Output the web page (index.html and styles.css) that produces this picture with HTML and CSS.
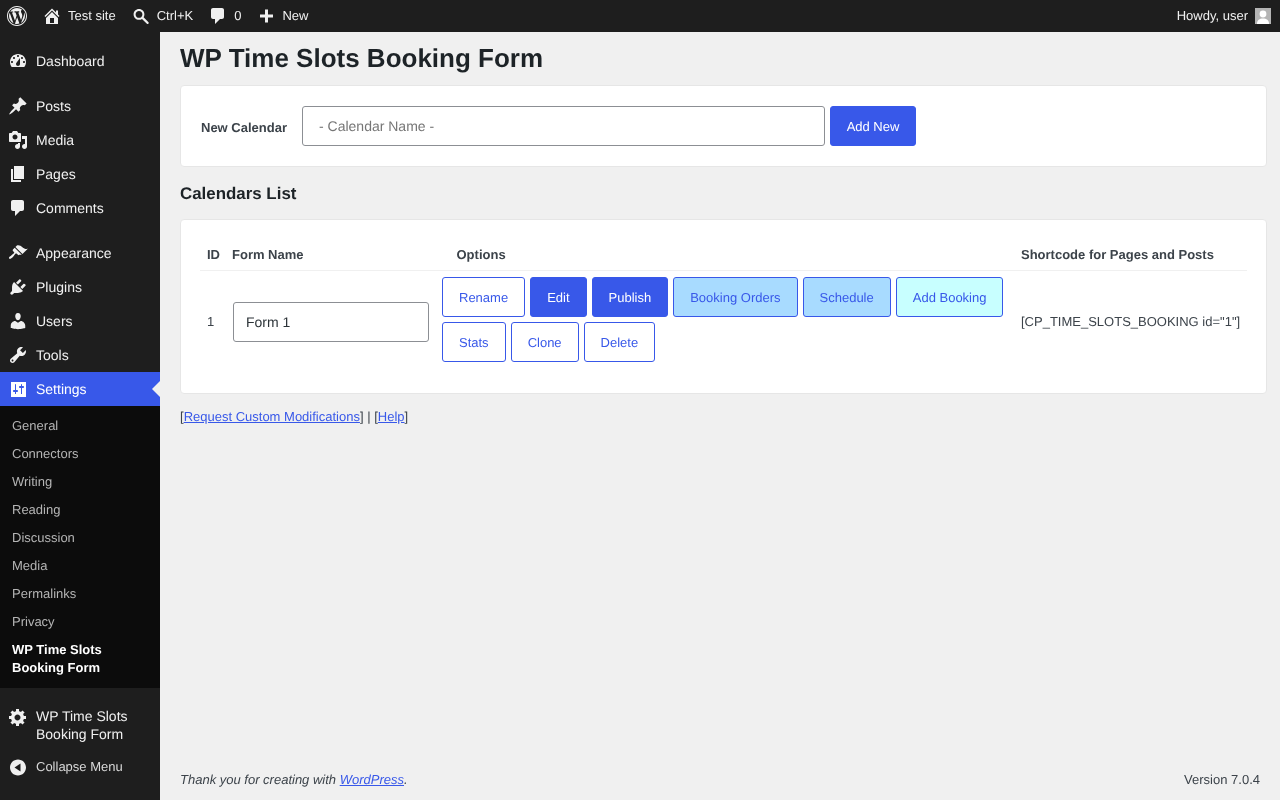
FILE: index.html
```html
<!DOCTYPE html>
<html>
<head lang="en">
    <meta charset="UTF-8">
    <title>WP Time Slots Booking Form</title>
    <link rel="stylesheet" href="styles.css">
</head>
<body>
    <!-- top bar -->
    <div class="adminbar">
        <div class="barleft">
            <a class="baritem"><svg width="20" height="20" viewBox="0 0 20 20"><path d="M20 10c0-5.52-4.48-10-10-10S0 4.48 0 10s4.48 10 10 10 10-4.48 10-10zM10 1.01c4.97 0 8.99 4.02 8.99 8.99s-4.02 8.99-8.99 8.99S1.01 14.97 1.01 10 5.03 1.01 10 1.01zM8.01 14.82L4.96 6.61c.49-.03 1.05-.08 1.05-.08.43-.05.38-1.01-.06-.99 0 0-1.29.1-2.13.1-.15 0-.33 0-.52-.01 1.44-2.17 3.9-3.6 6.7-3.6 2.09 0 3.99.79 5.41 2.09-.6-.08-1.45.35-1.45 1.42 0 .66.38 1.22.79 1.88.31.54.5 1.22.5 2.21 0 1.34-1.27 4.48-1.27 4.48l-2.71-7.5c.48-.03.75-.16.75-.16.43-.05.38-1.1-.05-1.08 0 0-1.3.11-2.14.11-.78 0-2.11-.11-2.11-.11-.43-.02-.48 1.06-.05 1.08l.84.08 1.12 3.04zm6.02 2.15L16.64 10s.67-1.69.39-3.81c.63 1.14.94 2.42.94 3.81 0 2.96-1.56 5.58-3.94 6.97zM2.68 6.77L6.5 17.25c-2.67-1.3-4.47-4.08-4.47-7.25 0-1.16.2-2.23.65-3.23zm7.45 4.53l2.29 6.25c-.75.27-1.57.42-2.42.42-.72 0-1.41-.11-2.06-.3z"/></svg></a>
            <a class="baritem"><svg width="20" height="20" viewBox="0 0 20 20"><path fill-rule="evenodd" d="M16 8.500l1.530 1.530-1.060 1.060L10 4.620l-6.470 6.470-1.060-1.060L10 2.500l4 4v-2h2v4zm-6-2.460l6 5.990V18H4v-5.970zM12 17v-5H8v5h4z"/></svg>Test site</a>
            <a class="baritem"><svg width="20" height="20" viewBox="0 0 20 20"><path fill-rule="evenodd" d="M12.600 11.300l4.900 4.900c.4.4.4 1 0 1.400l-.2.2c-.4.4-1 .4-1.400 0l-4.900-4.900c-.9.6-1.900.9-3 .9C5 13.800 2.600 11.400 2.600 8.400S5 3 8 3s5.400 2.400 5.400 5.400c0 1.100-.3 2.100-.8 2.900zM8 5C6.100 5 4.600 6.500 4.600 8.400S6.100 11.800 8 11.800s3.400-1.500 3.400-3.400S9.900 5 8 5z"/></svg>Ctrl+K</a>
            <a class="baritem"><svg width="20" height="20" viewBox="0 0 20 20"><path d="M5 2h9c1.100 0 2 .9 2 2v7c0 1.100-.9 2-2 2h-2l-5 5v-5H5c-1.100 0-2-.9-2-2V4c0-1.100.9-2 2-2z"/></svg>0</a>
            <a class="baritem"><svg width="20" height="20" viewBox="0 0 20 20"><path d="M17 8.500v3h-5v5H9v-5H4v-3h5v-5h3v5z"/></svg>New</a>
        </div>
        <div class="barright">
            Howdy, user
            <span class="avatar"><svg width="16" height="16" viewBox="0 0 16 16"><rect width="16" height="16" fill="#b4b4b4"/><circle cx="8" cy="6" r="3.400" fill="#fff"/><path d="M2 16c0-4 2.500-5.500 6-5.500s6 1.500 6 5.500z" fill="#fff"/></svg></span>
        </div>
    </div>

    <div class="wrapper">
        <!-- left menu -->
        <div class="sidemenu">
            <ul class="menu first">
                <li><svg width="20" height="20" viewBox="0 0 20 20"><path fill-rule="evenodd" d="M3.760 16h12.480c1.100-1.370 1.760-3.110 1.760-5 0-4.420-3.580-8-8-8s-8 3.580-8 8c0 1.890.66 3.630 1.760 5zM10 4c.55 0 1 .45 1 1s-.45 1-1 1-1-.45-1-1 .45-1 1-1zM6 6c.55 0 1 .45 1 1s-.45 1-1 1-1-.45-1-1 .45-1 1-1zm8 0c.55 0 1 .45 1 1s-.45 1-1 1-1-.45-1-1 .45-1 1-1zm-5.370 5.550L12 7v6c0 1.100-.9 2-2 2s-2-.9-2-2c0-.57.24-1.080.63-1.450zM4 10c.55 0 1 .45 1 1s-.45 1-1 1-1-.45-1-1 .45-1 1-1zm12 0c.55 0 1 .45 1 1s-.45 1-1 1-1-.45-1-1 .45-1 1-1z"/></svg>Dashboard</li>
            </ul>
            <ul class="menu">
                <li><svg width="20" height="20" viewBox="0 0 20 20"><path d="M10.440 3.020l1.820-1.820 6.360 6.350-1.830 1.820c-1.050-.68-2.480-.57-3.410.36l-.75.75c-.92.93-1.040 2.350-.35 3.410l-1.830 1.820-2.410-2.410-2.800 2.790c-.42.42-3.380 2.710-3.800 2.290s1.860-3.390 2.280-3.810l2.790-2.790L4.100 9.360l1.830-1.820c1.050.69 2.480.57 3.400-.36l.75-.75c.93-.92 1.050-2.350.36-3.410z"/></svg>Posts</li>
                <li><svg width="20" height="20" viewBox="0 0 20 20"><path fill-rule="evenodd" d="M13 11V4c0-.55-.45-1-1-1h-1.670L9 1H5L3.670 3H2c-.55 0-1 .45-1 1v7c0 .55.45 1 1 1h10c.55 0 1-.45 1-1zM7 4.500c1.380 0 2.500 1.120 2.500 2.500S8.380 9.500 7 9.500 4.500 8.380 4.500 7 5.620 4.500 7 4.500zM14 6h5v10.500c0 1.380-1.120 2.500-2.500 2.500S14 17.880 14 16.500s1.120-2.500 2.500-2.500c.17 0 .34.02.5.05V9h-3V6zm-4 8.050V13h2v3.500c0 1.380-1.120 2.500-2.500 2.500S7 17.880 7 16.500 8.120 14 9.500 14c.17 0 .34.02.5.05z"/></svg>Media</li>
                <li><svg width="20" height="20" viewBox="0 0 20 20"><path d="M6 15V2h10v13H6zm-1 1h8v2H3V5h2v11z"/></svg>Pages</li>
                <li><svg width="20" height="20" viewBox="0 0 20 20"><path d="M5 2h9c1.100 0 2 .9 2 2v7c0 1.100-.9 2-2 2h-2l-5 5v-5H5c-1.100 0-2-.9-2-2V4c0-1.100.9-2 2-2z"/></svg>Comments</li>
            </ul>
            <ul class="menu settings">
                <li><svg width="20" height="20" viewBox="0 0 20 20"><path d="M14.480 11.060L7.410 3.990l1.500-1.500c.5-.56 2.300-.47 3.510.32 1.210.8 1.430 1.280 2.910 2.100 1.180.64 2.450 1.260 4.450.85zm-.71.71L6.700 4.700 4.930 6.470c-.39.39-.39 1.020 0 1.410l1.060 1.060c.39.39.39 1.030 0 1.420-.6.6-1.430 1.110-2.210 1.690-.35.26-.7.53-1.010.84C1.430 13.230.4 14.800 1.200 15.600c.8.790 2.360-.24 3.700-1.570.3-.31.58-.66.84-1.010.58-.78 1.090-1.610 1.690-2.210.39-.39 1.020-.39 1.410 0l1.060 1.060c.39.39 1.020.39 1.410 0z"/></svg>Appearance</li>
                <li><svg width="20" height="20" viewBox="0 0 20 20"><path d="M13.110 4.360L9.870 7.600 8 5.730l3.240-3.240c.35-.34 1.050-.2 1.560.32.52.51.66 1.210.31 1.550zm-8 1.770l.91-1.120 9.010 9.010-1.190.84c-.71.71-2.630 1.160-3.820 1.160H6.140L4.900 17.260c-.59.59-1.540.59-2.120 0-.59-.58-.59-1.530 0-2.120l1.240-1.240v-3.880c0-1.130.4-3.190 1.090-3.890zm7.260 3.970l3.240-3.240c.34-.35 1.040-.21 1.550.31.52.51.66 1.210.31 1.550l-3.240 3.250z"/></svg>Plugins</li>
                <li><svg width="20" height="20" viewBox="0 0 20 20"><path d="M10 9.250c-2.270 0-2.730-3.440-2.730-3.440C7 4.020 7.820 2 9.970 2c2.160 0 2.980 2.020 2.710 3.810 0 0-.41 3.440-2.680 3.440zm0 2.570L12.720 10c2.390 0 4.520 2.330 4.520 4.530v2.490s-3.650 1.130-7.240 1.130c-3.650 0-7.240-1.130-7.240-1.130v-2.490c0-2.250 1.940-4.480 4.470-4.480z"/></svg>Users</li>
                <li><svg width="20" height="20" viewBox="0 0 20 20"><path fill-rule="evenodd" d="M16.680 9.770c-1.340 1.340-3.300 1.670-4.950.99l-5.410 6.520c-.99.99-2.590.99-3.580 0s-.99-2.590 0-3.570l6.520-5.420c-.68-1.650-.35-3.610.99-4.950 1.280-1.280 3.120-1.620 4.720-1.060l-2.890 2.890 2.820 2.820 2.860-2.870c.53 1.580.18 3.390-1.080 4.650zM3.810 16.210c.4.39 1.040.39 1.430 0 .4-.4.4-1.040 0-1.430-.39-.4-1.030-.4-1.430 0-.39.39-.39 1.030 0 1.430z"/></svg>Tools</li>
                <li class="current"><svg width="20" height="20" viewBox="0 0 20 20"><path fill-rule="evenodd" d="M18 18V3H3v15zM8 11h1c.55 0 1 .45 1 1s-.45 1-1 1H8v2h-1V13H6c-.55 0-1-.45-1-1s.45-1 1-1h1V5.500c0-.28.22-.5.5-.5s.5.22.5.5V11zm5-2h-1c-.55 0-1-.45-1-1s.45-1 1-1h1V5.500c0-.28.22-.5.5-.5s.5.22.5.5V7h1c.55 0 1 .45 1 1s-.45 1-1 1h-1v6h-1V9z"/></svg>Settings<span class="arrow"></span></li>
            </ul>
            <ul class="submenu">
                <li>General</li>
                <li>Connectors</li>
                <li>Writing</li>
                <li>Reading</li>
                <li>Discussion</li>
                <li>Media</li>
                <li>Permalinks</li>
                <li>Privacy</li>
                <li class="active">WP Time Slots Booking Form</li>
            </ul>
            <ul class="menu plugin">
                <li class="tall"><svg width="20" height="20" viewBox="0 0 20 20"><path fill-rule="evenodd" d="M18 12h-2.180c-.17.7-.44 1.350-.81 1.930l1.540 1.540-2.100 2.100-1.540-1.540c-.58.36-1.230.64-1.910.81V19H8v-2.160c-.68-.17-1.330-.45-1.910-.81l-1.540 1.540-2.120-2.120 1.540-1.540c-.36-.58-.64-1.230-.81-1.910H1V9.030h2.170c.17-.7.44-1.350.81-1.930L2.440 5.560l2.120-2.120L6.100 4.980c.58-.37 1.230-.64 1.930-.81V2h3v2.180c.68.16 1.330.44 1.910.8l1.540-1.540 2.120 2.120-1.540 1.540c.36.59.64 1.240.81 1.940H18V12zm-8.500 1.500c1.660 0 3-1.340 3-3s-1.340-3-3-3-3 1.340-3 3 1.340 3 3 3z"/></svg><span>WP Time Slots Booking Form</span></li>
                <li class="collapse"><svg width="20" height="20" viewBox="0 0 20 20"><path fill-rule="evenodd" d="M10 2.500c-4.420 0-8 3.580-8 8s3.580 8 8 8 8-3.580 8-8-3.580-8-8-8zM12.500 14.500l-6-4 6-4v8z"/></svg>Collapse Menu</li>
            </ul>
        </div>

        <!-- page content -->
        <div class="content">
            <div class="main">
                <h1>WP Time Slots Booking Form</h1>

                <div class="card newcal">
                    <label>New Calendar</label>
                    <input class="namefield" type="text" placeholder="- Calendar Name -">
                    <button class="btn solid addnew">Add New</button>
                </div>

                <h2>Calendars List</h2>

                <div class="card listcard">
                    <table class="callist">
                        <thead>
                            <tr>
                                <th class="colid">ID</th>
                                <th class="colname">Form Name</th>
                                <th class="colopts">Options</th>
                                <th class="colcode">Shortcode for Pages and Posts</th>
                            </tr>
                        </thead>
                        <tbody>
                            <tr>
                                <td class="num">1</td>
                                <td><input class="formfield" type="text" value="Form 1"></td>
                                <td>
                                    <div class="btnrow">
                                        <button class="btn">Rename</button>
                                        <button class="btn solid">Edit</button>
                                        <button class="btn solid">Publish</button>
                                        <button class="btn sky">Booking Orders</button>
                                        <button class="btn sky">Schedule</button>
                                        <button class="btn aqua">Add Booking</button>
                                        <button class="btn">Stats</button>
                                        <button class="btn">Clone</button>
                                        <button class="btn">Delete</button>
                                    </div>
                                </td>
                                <td class="code">[CP_TIME_SLOTS_BOOKING id="1"]</td>
                            </tr>
                        </tbody>
                    </table>
                </div>

                <p class="links">[<a href="#">Request Custom Modifications</a>] | [<a href="#">Help</a>]</p>
            </div>

            <div class="footer">
                <span class="thanks">Thank you for creating with <a href="#">WordPress</a>.</span>
                <span>Version 7.0.4</span>
            </div>
        </div>
    </div>
</body>
</html>
```

FILE: styles.css
```css
* {
    box-sizing: border-box;
}
html, body {
    margin: 0;
    padding: 0;
    height: 100%;
    overflow: hidden;
}
body {
    background-color: #f0f0f0;
    color: #3c434a;
    font-family: "Liberation Sans", Arial, sans-serif;
    font-size: 13px;
    line-height: 1.4;
    text-rendering: geometricPrecision;
}
a {
    color: #3858e9;
}

/* top bar */
.adminbar {
    height: 32px;
    background-color: #1e1e1e;
    color: #f0f0f0;
    display: flex;
    justify-content: space-between;
    align-items: center;
    padding: 0 9px 0 7px;
    will-change: transform;
}
.barleft {
    display: flex;
    align-items: center;
    gap: 15px;
}
.adminbar svg {
    fill: #f0f0f0;
    display: block;
}
.baritem {
    display: flex;
    align-items: center;
    gap: 6px;
    color: #f0f0f0;
}
.barright {
    display: flex;
    align-items: center;
    gap: 7px;
}
.avatar {
    display: block;
    width: 16px;
    height: 16px;
}

/* left menu */
.wrapper {
    display: flex;
    height: 768px;
    will-change: transform;
}
.sidemenu {
    width: 160px;
    flex-shrink: 0;
    background-color: #1e1e1e;
    color: #f0f0f0;
    font-size: 14px;
}
.menu {
    list-style: none;
    margin: 0 0 11px;
    padding: 0;
}
.menu.first {
    padding-top: 12px;
}
.menu.settings {
    margin-bottom: 0;
}
.menu li {
    position: relative;
    display: flex;
    align-items: center;
    height: 34px;
    line-height: 18px;
}
.menu svg {
    width: 20px;
    height: 20px;
    fill: #f0f0f0;
    margin: 0 8px;
    flex-shrink: 0;
}
.menu li.current {
    background-color: #3858e9;
    color: #fff;
}
.menu li.current svg {
    fill: #fff;
}
.arrow {
    position: absolute;
    right: 0;
    top: 9px;
    border: 8px solid transparent;
    border-left-width: 0;
    border-right-color: #f0f0f0;
}
.submenu {
    list-style: none;
    margin: 0;
    padding: 6px 0;
    background-color: #0c0c0c;
    color: #b4b4b4;
    font-size: 13px;
}
.submenu li {
    padding: 5px 12px;
    line-height: 18px;
}
.submenu li.active {
    color: #fff;
    font-weight: bold;
}
.menu.plugin {
    padding-top: 11px;
}
.menu li.tall {
    height: auto;
    align-items: flex-start;
    padding: 8px 0;
}
.menu li.collapse {
    height: 34px;
    color: #d8d8d8;
    font-size: 13px;
    margin-top: -1px;
}

/* page content */
.content {
    flex: 1;
    display: flex;
    flex-direction: column;
    justify-content: space-between;
    padding: 0 13px 0 20px;
}
h1 {
    margin: 0;
    padding: 8px 0 9px;
    font-size: 26px;
    line-height: 36px;
    font-weight: bold;
    color: #1d2327;
}
h2 {
    margin: 0;
    padding: 17px 0 15px;
    font-size: 16.9px;
    line-height: 20px;
    color: #1d2327;
}
.card {
    background-color: #fff;
    border: 1px solid #e6e6e6;
    border-radius: 4px;
}
.newcal {
    display: flex;
    align-items: center;
    padding: 20px;
}
.newcal label {
    font-weight: bold;
    width: 101px;
    margin-top: 5px;
}
.namefield {
    width: 523px;
    height: 40px;
    margin-right: 5px;
    padding: 0 16px;
    border: 1px solid #8c8f94;
    border-radius: 3px;
    font-family: inherit;
    font-size: 14px;
    text-rendering: geometricPrecision;
}
.namefield::placeholder {
    color: #757575;
}
.btn {
    height: 40px;
    padding: 2px 16px 0;
    border: 1px solid #3858e9;
    border-radius: 3px;
    background-color: #fff;
    color: #3858e9;
    font-family: inherit;
    font-size: 13px;
    text-rendering: geometricPrecision;
}
.btn.solid {
    background-color: #3858e9;
    color: #fff;
}
.btn.addnew {
    width: 86px;
    padding: 0;
}
.btn.sky {
    background-color: #a8dbff;
}
.btn.aqua {
    background-color: #c8ffff;
}
.listcard {
    padding: 19px 19px 20px;
}
.callist {
    width: 1047px;
    table-layout: fixed;
    border-collapse: collapse;
}
.callist th {
    height: 31px;
    padding: 2px 7px 0;
    text-align: left;
    font-size: 13px;
    border-bottom: 1px solid #f0f0f0;
}
.callist td {
    padding: 0 7px;
}
.callist td.num {
    padding-top: 1px;
}
.callist td.code {
    padding: 1px 0 0 7px;
    white-space: nowrap;
}
.colid {
    width: 25px;
}
.colname {
    width: 210px;
}
.callist th.colopts {
    padding-left: 21.500px;
}
.colcode {
    width: 233px;
}
.formfield {
    display: block;
    width: 196px;
    height: 40px;
    margin-left: 1px;
    padding: 0 12px;
    border: 1px solid #8c8f94;
    border-radius: 3px;
    color: #2c3338;
    font-family: inherit;
    font-size: 14px;
    text-rendering: geometricPrecision;
}
.btnrow {
    display: flex;
    flex-wrap: wrap;
    gap: 5px;
    padding: 6px 0 11px;
}
.links {
    margin: 14px 0 0;
    line-height: 18px;
}
.footer {
    display: flex;
    justify-content: space-between;
    padding: 0 7px 11px 0;
    line-height: 18px;
}
.thanks {
    font-style: italic;
}
```
